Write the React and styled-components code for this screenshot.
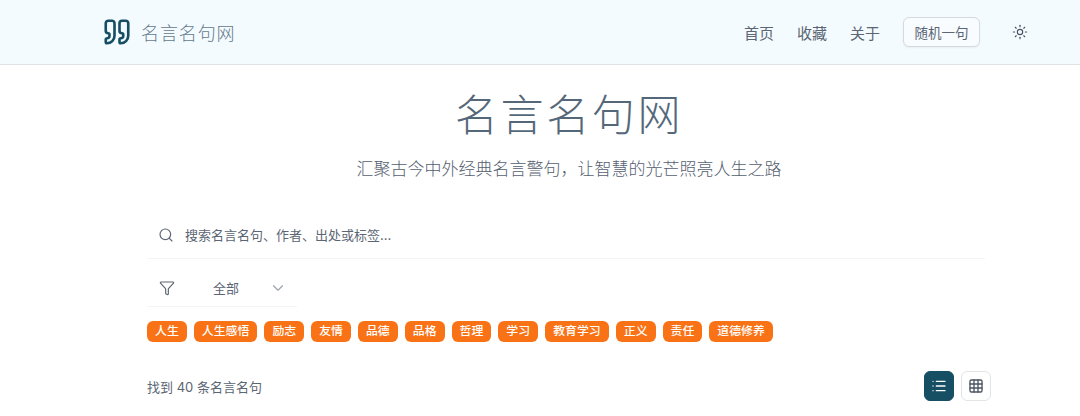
import React from "react";
import styled, { createGlobalStyle } from "styled-components";
import { Search, Filter, ChevronDown, Sun, List, Grid3x3, Quote } from "lucide-react";

const Global = createGlobalStyle`
  html, body { margin: 0; padding: 0; background: #fff; overflow: hidden; }
  body { font-family: "Inter", "Noto Sans CJK SC", sans-serif; color: #4b5563; }
`;

const Page = styled.div`
  width: 1080px;
  height: 416px;
  overflow: hidden;
`;

const Header = styled.header`
  height: 64px;
  background: #f3fbff;
  border-bottom: 1px solid #dfe3e6;
  display: flex;
  align-items: center;
  justify-content: space-between;
  padding: 0 52px 0 102px;
`;

const Brand = styled.div`
  display: flex;
  align-items: center;
  gap: 9px;
  color: #164e63;
`;

const BrandName = styled.span`
  font-family: "Liberation Serif", "Noto Sans CJK SC", serif;
  font-weight: 300;
  font-size: 18px;
  letter-spacing: 0.9px;
  color: #64798a;
`;

const Nav = styled.nav`
  display: flex;
  align-items: center;
`;

const NavLink = styled.a`
  font-size: 15px;
  color: #5b6573;
  margin-right: 23px;
`;

const RandomButton = styled.button`
  font: inherit;
  font-size: 13.5px;
  color: #5b6573;
  width: 77px;
  height: 30px;
  padding: 0;
  background: #f8fcfe;
  border: 1px solid #d5dade;
  border-radius: 6px;
  box-shadow: 0 1px 2px rgba(0, 0, 0, 0.05);
`;

const ThemeToggle = styled.span`
  display: flex;
  margin-left: 32px;
  color: #4b5563;
`;

const Main = styled.main`
  padding: 0 89px 0 147px;
`;

const Hero = styled.section`
  text-align: center;
  padding-top: 21px;
`;

const Title = styled.h1`
  margin: 0;
  font-family: "Liberation Serif", "Noto Sans CJK SC", serif;
  font-weight: 300;
  font-size: 43px;
  line-height: 62px;
  letter-spacing: 2.7px;
  color: #55687a;
`;

const Subtitle = styled.p`
  margin: 8px 0 0;
  font-size: 17px;
  line-height: 26px;
  font-weight: 300;
  color: #556070;
`;

const SearchBar = styled.div`
  margin-top: 29px;
  height: 48px;
  width: 838px;
  box-sizing: border-box;
  display: flex;
  align-items: center;
  padding-left: 11px;
  gap: 11px;
  border-bottom: 1px solid #f3f4f6;
  font-size: 13px;
  color: #5b6573;
`;

const FilterRow = styled.div`
  margin-top: 6px;
  width: 150px;
  height: 42px;
  box-sizing: border-box;
  padding: 4px 0 0 12px;
  border-bottom: 1px solid #f3f4f6;
  display: flex;
  align-items: center;
  font-size: 13px;
  color: #5b6573;
`;

const FilterLabel = styled.span`
  margin-left: 38px;
  width: 56px;
`;

const Tags = styled.div`
  margin-top: 14px;
  display: flex;
  gap: 7px;
`;

const Tag = styled.span`
  height: 21px;
  line-height: 20px;
  padding: 0 8px;
  border-radius: 6px;
  background: #f97316;
  color: #fff;
  font-size: 11.9px;
  font-weight: 500;
`;

const ResultBar = styled.div`
  margin-top: 29px;
  display: flex;
  align-items: center;
  justify-content: space-between;
  font-size: 13px;
  color: #5b6573;
`;

const ViewSwitch = styled.div`
  display: flex;
  gap: 7px;
`;

const ViewButton = styled.span`
  width: 30px;
  height: 30px;
  box-sizing: border-box;
  display: flex;
  align-items: center;
  justify-content: center;
  border-radius: 6px;
  background: ${(p) => (p.$active ? "#164e63" : "#fff")};
  color: ${(p) => (p.$active ? "#fff" : "#4b5563")};
  border: 1px solid ${(p) => (p.$active ? "#164e63" : "#e2e5e8")};
`;

const tags = ["人生", "人生感悟", "励志", "友情", "品德", "品格", "哲理", "学习", "教育学习", "正义", "责任", "道德修养"];

export default function App() {
  return (
    <Page>
      <Global />
      <Header>
        <Brand>
          <Quote size={30} strokeWidth={2.1} />
          <BrandName>名言名句网</BrandName>
        </Brand>
        <Nav>
          <NavLink>首页</NavLink>
          <NavLink>收藏</NavLink>
          <NavLink>关于</NavLink>
          <RandomButton>随机一句</RandomButton>
          <ThemeToggle><Sun size={16} strokeWidth={1.75} /></ThemeToggle>
        </Nav>
      </Header>
      <Main>
        <Hero>
          <Title>名言名句网</Title>
          <Subtitle>汇聚古今中外经典名言警句，让智慧的光芒照亮人生之路</Subtitle>
        </Hero>
        <SearchBar>
          <Search size={16} strokeWidth={1.75} />
          <span>搜索名言名句、作者、出处或标签...</span>
        </SearchBar>
        <FilterRow>
          <Filter size={16} strokeWidth={1.75} />
          <FilterLabel>全部</FilterLabel>
          <ChevronDown size={18} strokeWidth={1.5} color="#9ca3af" />
        </FilterRow>
        <Tags>
          {tags.map((t) => <Tag key={t}>{t}</Tag>)}
        </Tags>
        <ResultBar>
          <span>找到 40 条名言名句</span>
          <ViewSwitch>
            <ViewButton $active><List size={16} strokeWidth={2} /></ViewButton>
            <ViewButton><Grid3x3 size={16} strokeWidth={2} /></ViewButton>
          </ViewSwitch>
        </ResultBar>
      </Main>
    </Page>
  );
}
